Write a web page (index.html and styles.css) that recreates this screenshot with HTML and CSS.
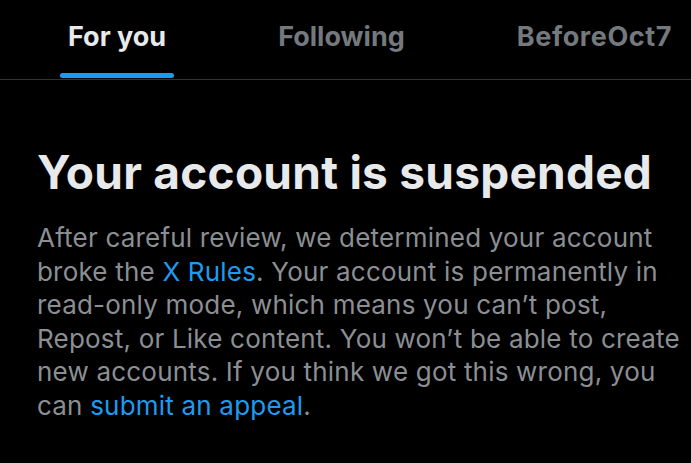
FILE: index.html
```html
<!DOCTYPE html>
<html lang="en">
<head>
<meta charset="utf-8">
<title>Account suspended</title>
<link rel="stylesheet" href="styles.css">
</head>
<body>
<nav class="tabs">
  <div class="tab tab-active">
    <span class="tab-label">For you</span>
    <span class="tab-indicator"></span>
  </div>
  <div class="tab">
    <span class="tab-label">Following</span>
  </div>
  <div class="tab">
    <span class="tab-label tab-label-wide">BeforeOct7</span>
  </div>
</nav>
<main class="notice">
  <h1 class="notice-title">Your account is suspended</h1>
  <p class="notice-body">After careful review, we determined your account broke the <a class="link" href="#">X Rules</a>. Your account is permanently in read-only mode, which means you can’t post, Repost, or Like content. You won’t be able to create new accounts. If you think we got this wrong, you can <a class="link" href="#">submit an appeal</a>.</p>
</main>
</body>
</html>
```
FILE: styles.css
```css
html, body {
  margin: 0;
  padding: 0;
  background: #000;
}
body {
  width: 691px;
  height: 463px;
  overflow: hidden;
  font-family: Inter, Roboto, "Liberation Sans", sans-serif;
  color: #e7e9ea;
}
.tabs {
  display: flex;
  gap: 96px;
  padding-left: 60px;
  height: 79px;
  border-bottom: 1px solid #2f3336;
}
.tab {
  display: flex;
  flex-direction: column;
  align-items: stretch;
  padding-top: 20px;
}
.tab-label {
  display: block;
  padding: 0 8px;
  font-size: 27px;
  line-height: 34px;
  font-weight: 700;
  color: #74797e;
  white-space: nowrap;
}
.tab-label-wide {
  letter-spacing: 0.6px;
}
.tab-active .tab-label {
  color: #e7e9ea;
}
.tab-indicator {
  display: block;
  margin-top: 19px;
  height: 5px;
  border-radius: 3px;
  background: #1d9bf0;
}
.notice {
  padding: 0 4px 0 37px;
}
.notice-title {
  margin: 0;
  padding-top: 64px;
  font-size: 46px;
  line-height: 56px;
  font-weight: 700;
  letter-spacing: 0.25px;
  color: #e7e9ea;
  white-space: nowrap;
}
.notice-body {
  margin: 21px 0 0;
  font-size: 26px;
  line-height: 33.5px;
  font-weight: 400;
  letter-spacing: 0.2px;
  color: #8b8f93;
}
.link {
  color: #1d9bf0;
  text-decoration: none;
}
```
